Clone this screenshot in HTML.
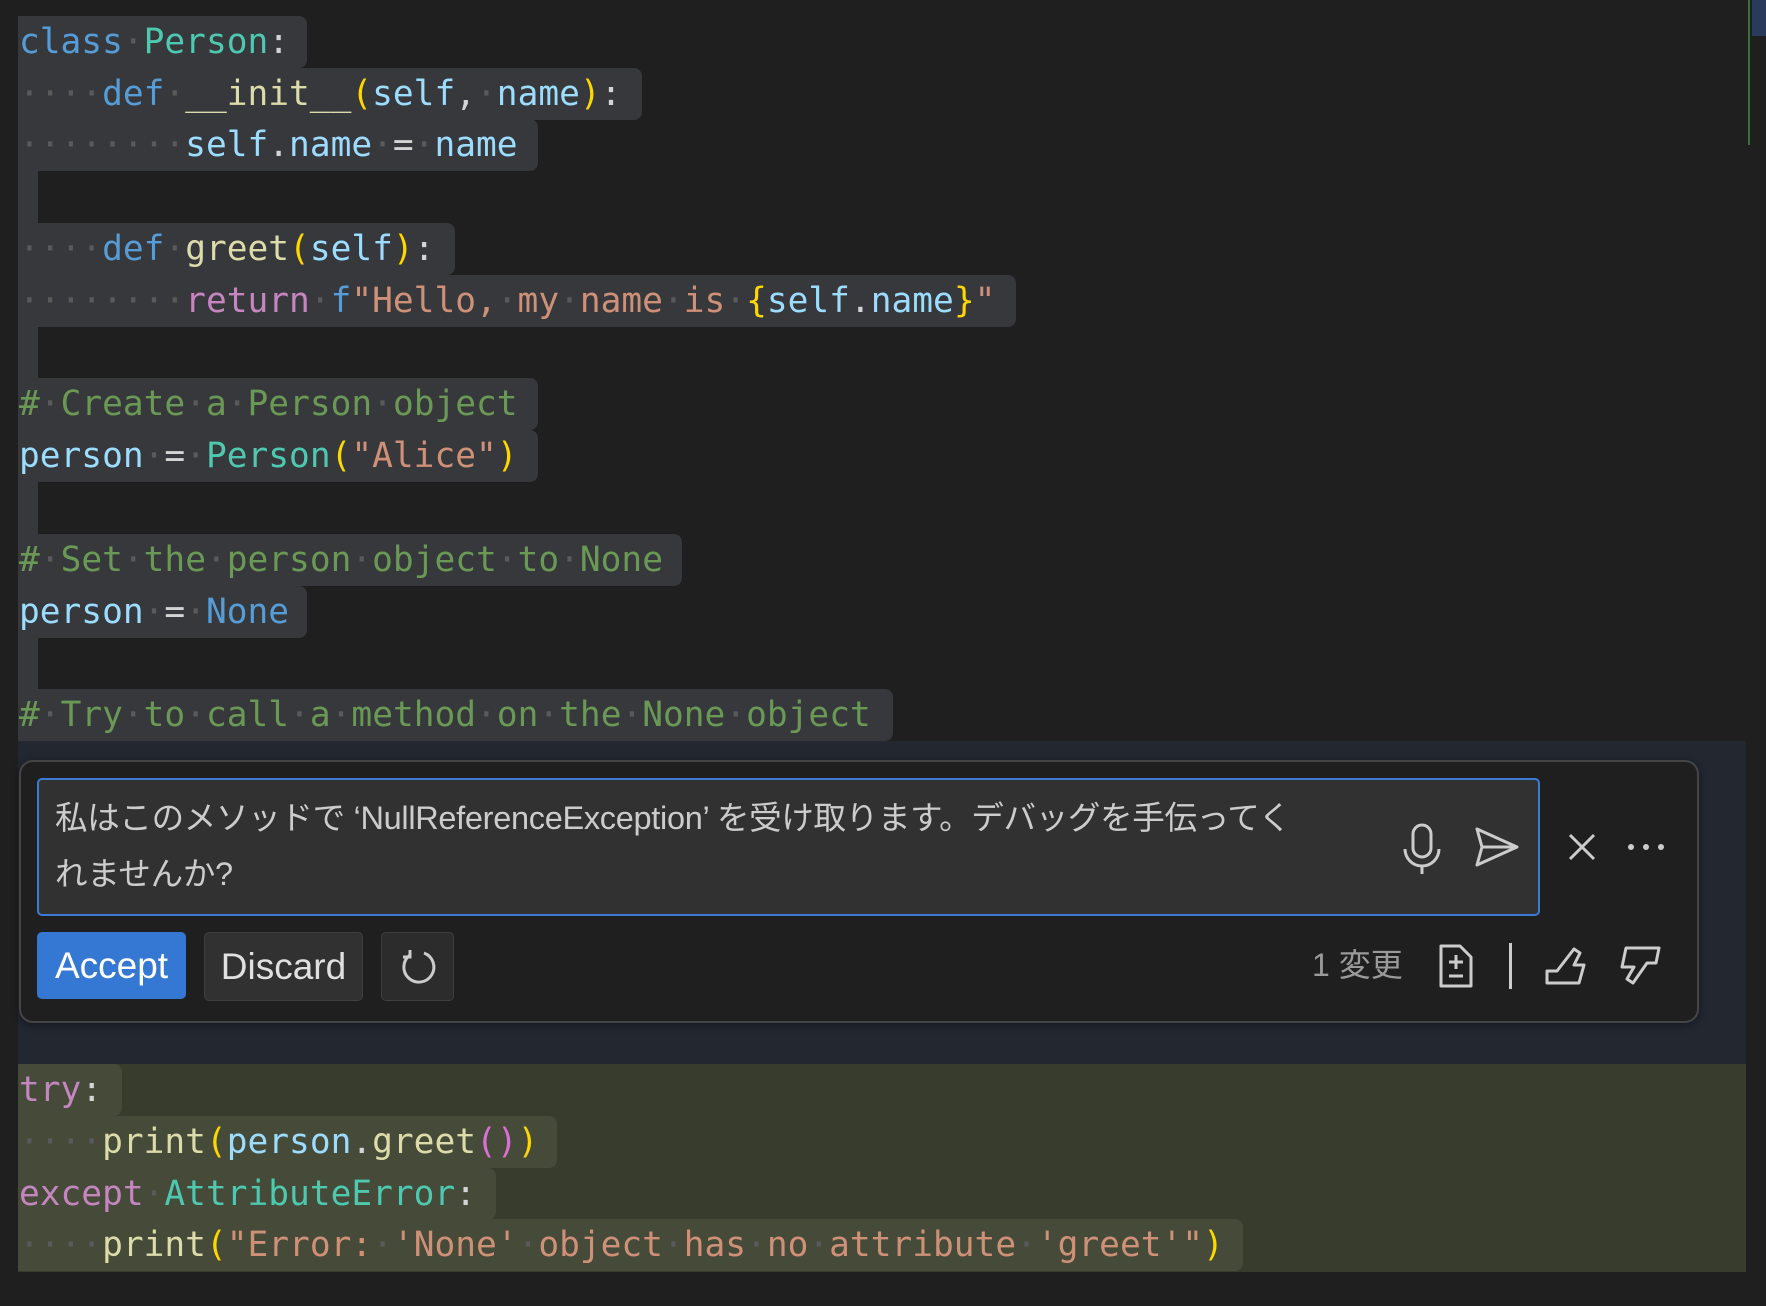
<!DOCTYPE html>
<html><head><meta charset="utf-8"><style>
body{margin:0;width:1766px;height:1306px;background:#1f1f1f;overflow:hidden;position:relative;font-family:"DejaVu Sans Mono","Liberation Mono",monospace}
.hl{position:absolute;left:18px;height:52px;background:#37383c;border-radius:0 8px 8px 0}
.ln{position:absolute;left:19px;height:52px;line-height:52px;font-size:34.5px;white-space:pre;color:#d4d4d4}
.d{color:#5a5a5a}.k{color:#569cd6}.c{color:#4ec9b0}.f{color:#dcdcaa}.v{color:#9cdcfe}.y{color:#ffd700}.s{color:#ce9178}.p{color:#c586c0}.m{color:#6a9955}.pk{color:#da70d6}
.g{position:absolute;left:18px;height:52px;background:#454a39;border-radius:0 8px 8px 0}
.btn{position:absolute;top:932px;height:67px;border-radius:5px;font-family:"Liberation Sans",sans-serif;font-size:37px;line-height:67px;text-align:center;color:#e0e0e0}
</style></head><body>
<div class="hl" style="top:16px;width:289px"></div>
<div class="hl" style="top:68px;width:624px"></div>
<div class="hl" style="top:119px;width:520px"></div>
<div class="hl" style="top:171px;width:20px;border-radius:0"></div>
<div class="hl" style="top:223px;width:437px"></div>
<div class="hl" style="top:275px;width:998px"></div>
<div class="hl" style="top:327px;width:20px;border-radius:0"></div>
<div class="hl" style="top:378px;width:520px"></div>
<div class="hl" style="top:430px;width:520px"></div>
<div class="hl" style="top:482px;width:20px;border-radius:0"></div>
<div class="hl" style="top:534px;width:664px"></div>
<div class="hl" style="top:586px;width:289px"></div>
<div class="hl" style="top:637px;width:20px;border-radius:0"></div>
<div class="hl" style="top:689px;width:875px"></div>

<div class="ln" style="top:16px"><span class="k">class</span><span class="d">·</span><span class="c">Person</span>:</div>
<div class="ln" style="top:68px"><span class="d">····</span><span class="k">def</span><span class="d">·</span><span class="f">__init__</span><span class="y">(</span><span class="v">self</span>,<span class="d">·</span><span class="v">name</span><span class="y">)</span>:</div>
<div class="ln" style="top:119px"><span class="d">········</span><span class="v">self</span>.<span class="v">name</span><span class="d">·</span>=<span class="d">·</span><span class="v">name</span></div>
<div class="ln" style="top:223px"><span class="d">····</span><span class="k">def</span><span class="d">·</span><span class="f">greet</span><span class="y">(</span><span class="v">self</span><span class="y">)</span>:</div>
<div class="ln" style="top:275px"><span class="d">········</span><span class="p">return</span><span class="d">·</span><span class="k">f</span><span class="s">"Hello,</span><span class="d">·</span><span class="s">my</span><span class="d">·</span><span class="s">name</span><span class="d">·</span><span class="s">is</span><span class="d">·</span><span class="y">{</span><span class="v">self</span>.<span class="v">name</span><span class="y">}</span><span class="s">"</span></div>
<div class="ln m" style="top:378px">#<span class="d">·</span>Create<span class="d">·</span>a<span class="d">·</span>Person<span class="d">·</span>object</div>
<div class="ln" style="top:430px"><span class="v">person</span><span class="d">·</span>=<span class="d">·</span><span class="c">Person</span><span class="y">(</span><span class="s">"Alice"</span><span class="y">)</span></div>
<div class="ln m" style="top:534px">#<span class="d">·</span>Set<span class="d">·</span>the<span class="d">·</span>person<span class="d">·</span>object<span class="d">·</span>to<span class="d">·</span>None</div>
<div class="ln" style="top:586px"><span class="v">person</span><span class="d">·</span>=<span class="d">·</span><span class="k">None</span></div>
<div class="ln m" style="top:689px">#<span class="d">·</span>Try<span class="d">·</span>to<span class="d">·</span>call<span class="d">·</span>a<span class="d">·</span>method<span class="d">·</span>on<span class="d">·</span>the<span class="d">·</span>None<span class="d">·</span>object</div>

<div style="position:absolute;left:18px;top:741px;width:1728px;height:323px;background:#222730"></div>
<div style="position:absolute;left:19px;top:760px;width:1676px;height:259px;background:#1f1f1f;border:2px solid #454545;border-radius:14px;box-shadow:0 2px 8px rgba(0,0,0,.4)"></div>
<div style="position:absolute;left:37px;top:778px;width:1499px;height:134px;background:#313131;border:2px solid #3a7bd5;border-radius:5px"></div>
<div style="position:absolute;left:55px;top:790px;width:1300px;font-family:'Liberation Sans','Noto Sans CJK JP',sans-serif;font-size:32.5px;line-height:56px;color:#cccccc;letter-spacing:-0.3px">私はこのメソッドで ‘NullReferenceException’ を受け取ります。デバッグを手伝ってく<br>れませんか?</div>
<svg style="position:absolute;left:1395px;top:820px" width="54" height="56" viewBox="0 0 54 56" fill="none" stroke="#cccccc" stroke-width="3"><rect x="18" y="5" width="18" height="32" rx="9"/><path d="M10 29a17 17 0 0 0 34 0M27 46v8"/></svg>
<svg style="position:absolute;left:1474px;top:826px" width="46" height="42" viewBox="0 0 46 42" fill="none" stroke="#cccccc" stroke-width="3" stroke-linejoin="round"><path d="M3 3L43 21L3 39L8 21Z M8 21H43"/></svg>
<svg style="position:absolute;left:1568px;top:833px" width="28" height="28" viewBox="0 0 28 28" stroke="#cccccc" stroke-width="3"><path d="M2 2L26 26M26 2L2 26"/></svg>
<svg style="position:absolute;left:1626px;top:840px" width="40" height="14"><circle cx="5" cy="7" r="3" fill="#ccc"/><circle cx="20" cy="7" r="3" fill="#ccc"/><circle cx="35" cy="7" r="3" fill="#ccc"/></svg>

<div class="btn" style="left:37px;width:149px;background:#3578d4;color:#fff">Accept</div>
<div class="btn" style="left:204px;width:157px;background:#313131;border:1px solid #3e3e3e">Discard</div>
<div class="btn" style="left:381px;width:71px;background:#2c2c2c;border:1px solid #3e3e3e"><svg style="margin-top:14px" width="40" height="40" viewBox="0 0 40 40" fill="none" stroke="#cccccc" stroke-width="3"><path d="M12 8A15 15 0 1 0 26 6"/><path d="M12 3v7h-7" /></svg></div>
<div style="position:absolute;left:1312px;top:944px;font-family:'Liberation Sans','Noto Sans CJK JP',sans-serif;font-size:32px;line-height:42px;color:#9a9a9a">1 変更</div>
<svg style="position:absolute;left:1438px;top:943px" width="36" height="46" viewBox="0 0 36 46" fill="none" stroke="#cccccc" stroke-width="3" stroke-linejoin="round"><path d="M3 3H22L33 14V43H3Z"/><path d="M18 12v14M11 19h14M11 33h14"/></svg>
<div style="position:absolute;left:1509px;top:943px;width:3px;height:46px;background:#cccccc"></div>
<svg style="position:absolute;left:1544px;top:945px" width="44" height="42" viewBox="0 0 44 42" fill="none" stroke="#cccccc" stroke-width="3" stroke-linejoin="round"><path d="M3 26H13L30 4L36 8L30 20H40L35 38H3Z"/></svg>
<svg style="position:absolute;left:1619px;top:945px" width="44" height="42" viewBox="0 0 44 42" fill="none" stroke="#cccccc" stroke-width="3" stroke-linejoin="round"><path d="M7 3H40L37 18H28L14 38L8 34L15 22H3Z"/></svg>

<div style="position:absolute;left:18px;top:1064px;width:1728px;height:208px;background:#373c2d"></div>
<div class="g" style="top:1064px;width:104px"></div>
<div class="g" style="top:1116px;width:539px"></div>
<div class="g" style="top:1168px;width:478px"></div>
<div class="g" style="top:1219px;width:1225px"></div>
<div class="ln" style="top:1064px"><span class="p">try</span>:</div>
<div class="ln" style="top:1116px"><span class="d">····</span><span class="f">print</span><span class="y">(</span><span class="v">person</span>.<span class="f">greet</span><span class="pk">()</span><span class="y">)</span></div>
<div class="ln" style="top:1168px"><span class="p">except</span><span class="d">·</span><span class="c">AttributeError</span>:</div>
<div class="ln" style="top:1219px"><span class="d">····</span><span class="f">print</span><span class="y">(</span><span class="s">"Error:</span><span class="d">·</span><span class="s">'None'</span><span class="d">·</span><span class="s">object</span><span class="d">·</span><span class="s">has</span><span class="d">·</span><span class="s">no</span><span class="d">·</span><span class="s">attribute</span><span class="d">·</span><span class="s">'greet'"</span><span class="y">)</span></div>
<div style="position:absolute;left:1748px;top:0;width:2px;height:145px;background:#3a6f3a"></div>
<div style="position:absolute;left:1752px;top:0;width:14px;height:36px;background:#2a3a5a"></div>
</body></html>
